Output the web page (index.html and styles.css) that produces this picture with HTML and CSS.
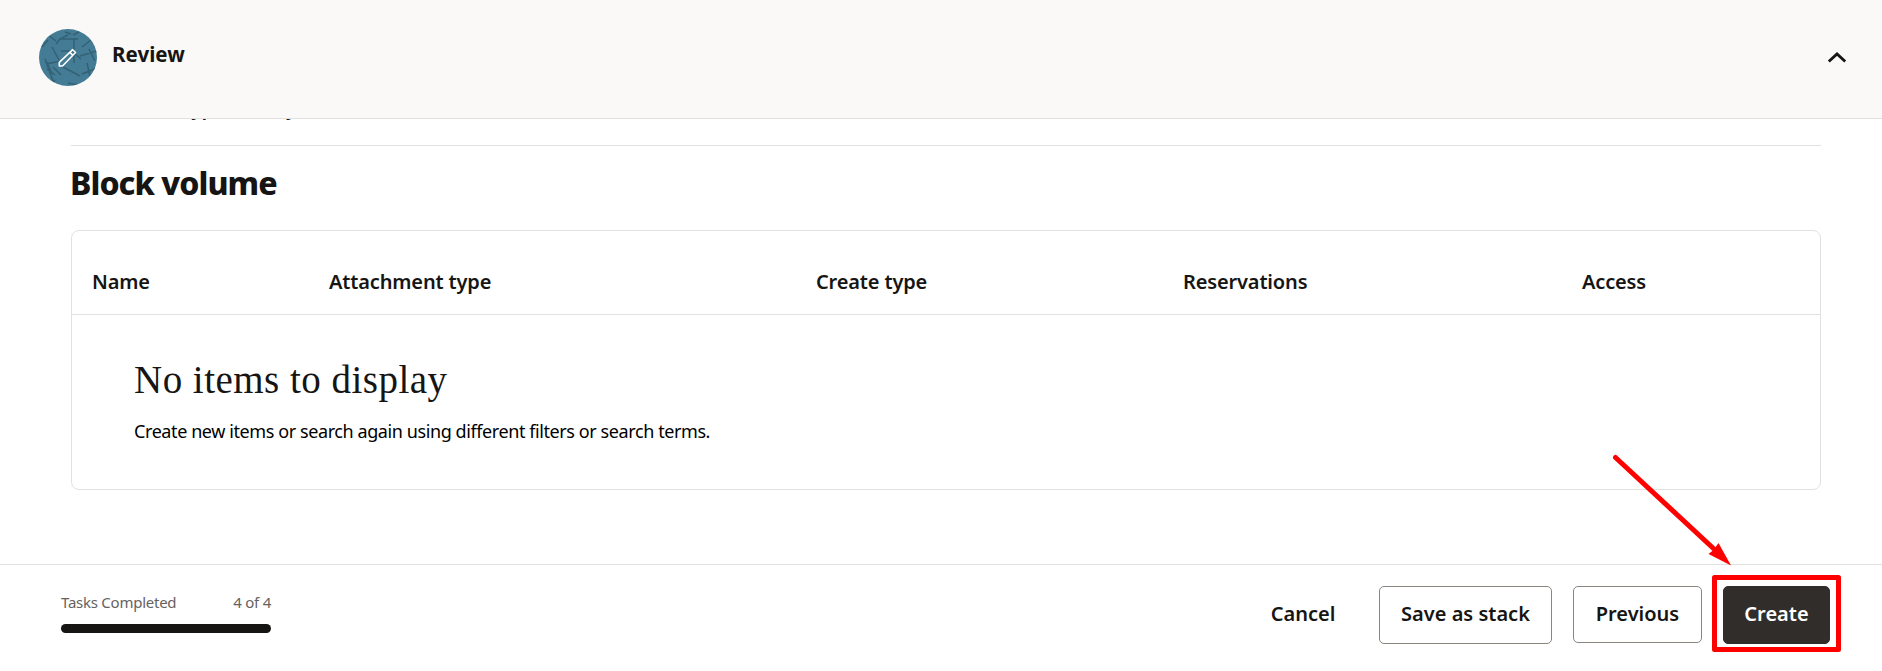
FILE: index.html
```html
<!DOCTYPE html>
<html lang="en">
<head>
<meta charset="utf-8">
<title>Review</title>
<link rel="stylesheet" href="styles.css">
</head>
<body>
<div class="page">
  <header class="header">
    <svg class="avatar" width="58" height="58" viewBox="0 0 58 58">
      <defs><clipPath id="disc"><ellipse cx="29" cy="28.5" rx="29" ry="28.5"/></clipPath></defs>
      <g clip-path="url(#disc)" fill="none">
        <rect width="58" height="58" fill="#437c94"/>
        <path stroke="#2f5a6e" stroke-width="1.5" opacity=".8" d="M9 6l8 6M17 15l4-5 8-4M20 10h19M35 10v24M22 22h13M13 18l7 13M3 18l6-7M6 30l8 22M7 35l15-3M8 40l8 6M8 33l5 12M22 37l19 10M41 27l17-5M36 25l6 5M43 18l9-7M48 34l3 13M43 45l15-6M50 20l6 12M29 54l10 2M14 54l2-3M34 6l6-3M26 3l6 2M14 38l8 8"/>
        <path stroke="#fff" stroke-width="1.6" stroke-linejoin="round" d="M20.300 37v-3.600L33.700 20.700l2.800 2.800L23.500 37z M30.900 23.400l2.800 2.800"/>
      </g>
    </svg>
    <h1 class="header-title">Review</h1>
    <svg class="chevron" width="20" height="14" viewBox="0 0 20 14"><path d="M1.800 10.500L10 3l8.200 7.500" fill="none" stroke="#161513" stroke-width="2.800"/></svg>
  </header>
  <main class="content">
    <div class="scrolled-row"><span>Attachment type</span><span>Primary</span></div>
    <h2 class="section-title">Block volume</h2>
    <section class="card">
      <div class="columns">
        <span>Name</span><span>Attachment type</span><span>Create type</span><span>Reservations</span><span>Access</span>
      </div>
      <div class="empty">
        <h3 class="empty-title">No items to display</h3>
        <p class="empty-text">Create new items or search again using different filters or search terms.</p>
      </div>
    </section>
  </main>
  <footer class="footer">
    <div class="progress">
      <div class="progress-labels"><span>Tasks Completed</span><span>4 of 4</span></div>
      <div class="bar"></div>
    </div>
    <div class="actions">
      <button class="btn cancel">Cancel</button>
      <button class="btn save">Save as stack</button>
      <button class="btn previous">Previous</button>
      <button class="btn create">Create</button>
    </div>
  </footer>
  <svg class="annotation" width="1882" height="671" viewBox="0 0 1882 671">
    <rect x="1714.500" y="577.500" width="124" height="72" fill="none" stroke="#f00" stroke-width="5" stroke-linejoin="round"/>
    <path d="M1615.500 457.500L1714 549" stroke="#f00" stroke-width="5" stroke-linecap="round"/>
    <path d="M1731 565.500l-22.500-11.500 5-4 5-7z" fill="#f00" stroke="none"/>
  </svg>
</div>
</body>
</html>
```
FILE: styles.css
```css
* { box-sizing: border-box; }
body { margin: 0; background: #fff; color: #161513; font-family: "Noto Sans", "Open Sans", sans-serif; }
h1, h2, h3, p { margin: 0; }
.page { position: relative; width: 1882px; height: 671px; overflow: hidden; display: grid; grid-template-rows: 119px 445px 107px; }
.header { height: 119px; background: #faf9f7; border-bottom: 1px solid #e1e1e0; display: flex; align-items: flex-start; padding: 29px 35px 0 39px; }
.header-title { font-size: 20.500px; line-height: 28px; font-weight: 700; letter-spacing: .05px; margin: 11px 0 0 15px; }
.chevron { margin: 22px 0 0 auto; }
.content { padding: 0 61px 0 71px; overflow: hidden; }
.scrolled-row { display: flex; height: 27px; line-height: 28px; font-size: 20px; font-weight: 600; letter-spacing: -.75px; border-bottom: 1px solid #e1e1e0; white-space: nowrap; overflow: hidden; }
.scrolled-row span { margin-top: -25px; height: 28px; }
.section-title { font-size: 32px; line-height: 40px; font-weight: 800; letter-spacing: -.95px; padding-top: 17px; height: 84px; margin-left: -1px; white-space: nowrap; }
.card { height: 260px; border: 1px solid #e1e1e0; border-radius: 8px; }
.columns { display: grid; grid-template-columns: 237px 487px 367px 399px 1fr; height: 84px; padding: 37px 0 0 20px; border-bottom: 1px solid #e1e1e0; font-size: 20px; line-height: 28px; font-weight: 600; letter-spacing: -.15px; white-space: nowrap; }
.empty { padding: 41px 0 0 62px; white-space: nowrap; }
.empty-title { font: 400 39px/48px "Liberation Serif", serif; letter-spacing: .48px; }
.empty-text { font-size: 18px; line-height: 24px; letter-spacing: -.41px; margin-top: 15px; color: #000; }
.footer { border-top: 1px solid #e1e1e0; display: flex; justify-content: space-between; align-items: flex-start; padding: 21px 52px 0 61px; }
.progress { width: 210px; padding-top: 5px; }
.progress-labels { display: flex; justify-content: space-between; font-size: 15px; line-height: 22px; letter-spacing: -.25px; color: #65625f; white-space: nowrap; }
.bar { height: 9px; margin-top: 11px; border-radius: 4.500px; background: #161513; }
.actions { display: flex; }
.btn { height: 58px; padding: 0 0 4px; border: 1px solid #8b8580; border-radius: 5px; background: #fff; color: #161513; font-family: inherit; font-size: 20px; font-weight: 600; white-space: nowrap; }
.cancel { border-color: transparent; width: 110px; margin-right: 21px; }
.save { width: 173px; margin-right: 21px; }
.previous { width: 129px; height: 57px; padding-bottom: 3px; margin-right: 21px; }
.create { width: 107px; background: #312d2a; border-color: #312d2a; color: #fff; }
.annotation { position: absolute; inset: 0; pointer-events: none; }
```
